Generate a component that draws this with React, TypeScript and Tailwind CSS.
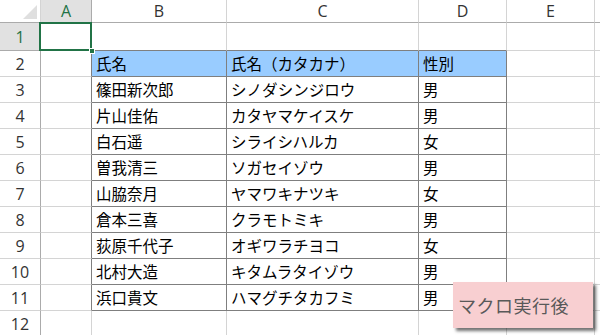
import React from "react";

const COLS = [
  { key: "A", w: 51 },
  { key: "B", w: 135 },
  { key: "C", w: 192 },
  { key: "D", w: 88 },
  { key: "E", w: 88 },
  { key: "F", w: 60 },
];

const ROW_H = [28, 26, 26, 26, 26, 26, 26, 26, 26, 26, 26, 26];

const people: [string, string, string][] = [
  ["篠田新次郎", "シノダシンジロウ", "男"],
  ["片山佳佑", "カタヤマケイスケ", "男"],
  ["白石遥", "シライシハルカ", "女"],
  ["曽我清三", "ソガセイゾウ", "男"],
  ["山脇奈月", "ヤマワキナツキ", "女"],
  ["倉本三喜", "クラモトミキ", "男"],
  ["荻原千代子", "オギワラチヨコ", "女"],
  ["北村大造", "キタムラタイゾウ", "男"],
  ["浜口貴文", "ハマグチタカフミ", "男"],
];

const LIGHT = "#d4d4d4";
const DARK = "#7f7f7f";

function cellText(row: number, col: number): string {
  if (row === 2) return ["", "氏名", "氏名（カタカナ）", "性別", "", ""][col];
  if (row >= 3 && row <= 11) {
    const p = people[row - 3];
    if (col >= 1 && col <= 3) return p[col - 1];
  }
  return "";
}

// Table B2:D11 has dark outlines on every side of each cell
function inTable(row: number, col: number) {
  return row >= 2 && row <= 11 && col >= 1 && col <= 3;
}

export default function App() {
  const font = '"Noto Sans CJK JP", "Noto Sans", sans-serif';
  return (
    <div className="relative w-[600px] h-[335px] overflow-hidden bg-white" style={{ fontFamily: font }}>
      {/* column headers */}
      <div className="flex h-[23px]">
        <div className="relative w-[41px] h-[23px] shrink-0 border-r border-b border-r-[#d4d4d4] border-b-[#ababab] bg-white">
          <svg className="absolute right-[3px] bottom-[3px]" width="14" height="14" viewBox="0 0 14 14">
            <polygon points="14,0 14,14 0,14" fill="#dfdfdf" />
          </svg>
        </div>
        {COLS.map((c) => (
          <div
            key={c.key}
            style={{ width: c.w }}
            className={`shrink-0 h-[23px] border-b flex items-center justify-center text-[16px] ${
              c.key === "A"
                ? "bg-[#e1e1e1] text-[#217346] border-b-[#217346] border-r border-r-[#ababab]"
                : "bg-white text-[#333333] border-b-[#ababab] border-r border-r-[#d4d4d4]"
            }`}
          >
            {c.key !== "F" && (
              <span className="leading-none font-['Open_Sans',sans-serif]">{c.key}</span>
            )}
          </div>
        ))}
      </div>

      {/* rows */}
      {ROW_H.map((h, ri) => {
        const row = ri + 1;
        return (
          <div key={row} className="flex" style={{ height: h }}>
            <div
              style={{ height: h }}
              className={`w-[41px] shrink-0 border-r border-b flex items-center justify-center text-[16px] ${
                row === 1
                  ? "bg-[#e1e1e1] text-[#217346] border-r-[#217346] border-b-[#ababab]"
                  : "bg-white text-[#333333] border-r-[#ababab] border-b-[#d4d4d4]"
              }`}
            >
              <span className="leading-none font-['Open_Sans',sans-serif]">{row}</span>
            </div>
            {COLS.map((c, ci) => {
              const text = cellText(row, ci);
              const rightDark = inTable(row, ci) || inTable(row, ci + 1);
              const bottomDark = inTable(row, ci) || inTable(row + 1, ci);
              const fill = row === 2 && inTable(row, ci);
              return (
                <div
                  key={c.key}
                  style={{
                    width: c.w,
                    height: h,
                    borderRightColor: rightDark ? DARK : LIGHT,
                    borderBottomColor: bottomDark ? DARK : LIGHT,
                  }}
                  className={`shrink-0 border-r border-b flex items-center pl-[4px] text-[15.5px] text-black whitespace-nowrap ${
                    fill ? "bg-[#99ccff]" : "bg-white"
                  }`}
                >
                  {text && <span className="leading-none">{text}</span>}
                </div>
              );
            })}
          </div>
        );
      })}

      {/* active cell A1 */}
      <div className="absolute left-[39px] top-[22px] w-[53px] h-[29px] border-2 border-[#217346] pointer-events-none" />
      <div className="absolute left-[89px] top-[48px] w-[6px] h-[6px] bg-[#217346] border border-white" />

      {/* note shape */}
      <div className="absolute left-[453px] top-[282px] w-[140px] h-[46px] bg-[#f8cfd1] shadow-[3px_3px_3px_rgba(0,0,0,0.55)] flex items-center pl-[5px]">
        <span className="text-[18px] text-[#595959] leading-none tracking-[0.5px]">マクロ実行後</span>
      </div>
    </div>
  );
}
